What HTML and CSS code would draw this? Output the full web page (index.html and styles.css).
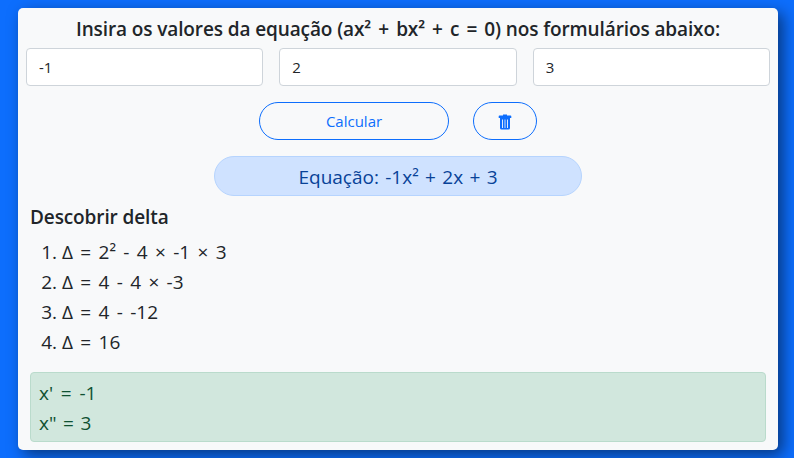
FILE: index.html
```html
<!DOCTYPE html>
<html lang="pt-BR">
<head>
<meta charset="utf-8">
<title>Equação do segundo grau</title>
<link rel="stylesheet" href="styles.css">
</head>
<body>
<main class="card">
  <h1 class="title">Insira os valores da equação <span class="formula">(ax² + bx² + c = 0)</span> nos formulários abaixo:</h1>
  <form class="form">
    <div class="fields">
      <input class="field" type="text" value="-1" aria-label="a">
      <input class="field" type="text" value="2" aria-label="b">
      <input class="field" type="text" value="3" aria-label="c">
    </div>
    <div class="actions">
      <button class="btn btn-calc" type="button">Calcular</button>
      <button class="btn btn-clear" type="button" aria-label="Limpar">
        <svg width="14" height="16" viewBox="0 0 14 16" fill="currentColor"><path fill-rule="evenodd" d="M5 .5h4v1h3.500q.8 0 .8.8V4H.7V2.300q0-.8.8-.8H5zM2 4h10V14q0 1.500-1.500 1.500h-7Q2 15.500 2 14zM4 5.500v8.500h.9V5.500zM6.600 5.500v8.500h.8V5.500zM9.100 5.500v8.500h.9V5.500z"/></svg>
      </button>
    </div>
  </form>
  <div class="equation">Equação: -1x² + 2x + 3</div>
  <section class="steps">
    <h2 class="subtitle">Descobrir delta</h2>
    <ol class="list">
      <li><span>Δ = 2² - 4 × -1 × 3</span></li>
      <li><span>Δ = 4 - 4 × -3</span></li>
      <li><span>Δ = 4 - -12</span></li>
      <li><span>Δ = 16</span></li>
    </ol>
  </section>
  <div class="result">
    <div>x' = -1</div>
    <div class="second">x" = 3</div>
  </div>
</main>
</body>
</html>
```
FILE: styles.css
```css
* { box-sizing: border-box; }
body {
  margin: 0;
  height: 458px;
  overflow: hidden;
  padding: 8px 16px 8px 18px;
  background: #0d6efd;
  color: #212529;
  font: 400 20px/30px "Open Sans", "Noto Sans", sans-serif;
}
.card {
  height: 442px;
  padding: 8px;
  background: #f8f9fa;
  border-radius: 5px;
  box-shadow: 5px 5px 15px rgba(0, 0, 0, .5);
}
.title, .subtitle {
  margin: 0;
  font-size: 19px;
  line-height: 24px;
  font-weight: 600;
  letter-spacing: -.11px;
  white-space: nowrap;
}
.title { height: 32px; padding-top: 1px; text-align: center; }
.formula { word-spacing: 2.3px; }
.fields { display: grid; grid-template-columns: repeat(3, 1fr); gap: 16px; }
.field {
  width: 100%;
  height: 38px;
  padding: 6px 12px;
  border: 1px solid #ced4da;
  border-radius: 4px;
  background: #fff;
  color: #212529;
  font: 400 15px/24px "Open Sans", "Noto Sans", sans-serif;
}
.actions { display: flex; justify-content: center; gap: 24px; margin-top: 16px; }
.btn {
  display: flex;
  align-items: center;
  justify-content: center;
  height: 38px;
  padding: 0;
  border: 1px solid #0d6efd;
  border-radius: 19px;
  background: transparent;
  color: #0d6efd;
  font: 400 15px/24px "Open Sans", "Noto Sans", sans-serif;
}
.btn-calc { width: 190px; }
.btn-clear { width: 64px; padding-top: 2px; }
.equation {
  width: 368px;
  height: 40px;
  margin: 16px auto 0;
  padding-top: 5px;
  border: 1px solid #b6d4fe;
  border-radius: 20px;
  background: #cfe2ff;
  color: #084298;
  text-align: center;
  font-size: 19px;
  word-spacing: 1.4px;
  white-space: nowrap;
}
.steps { padding: 9px 4px 0; }
.list { margin: 8px 0 0; padding-left: 32px; font-size: 19px; }
.list span { word-spacing: 2.4px; }
.result {
  height: 70px;
  margin: 15px 4px 0;
  padding: 5px 8px;
  border: 1px solid #badbcc;
  border-radius: 4px;
  background: #d1e7dd;
  color: #0f5132;
  font-size: 19px;
  word-spacing: 2.8px;
}
.second { word-spacing: 1.6px; }
```
